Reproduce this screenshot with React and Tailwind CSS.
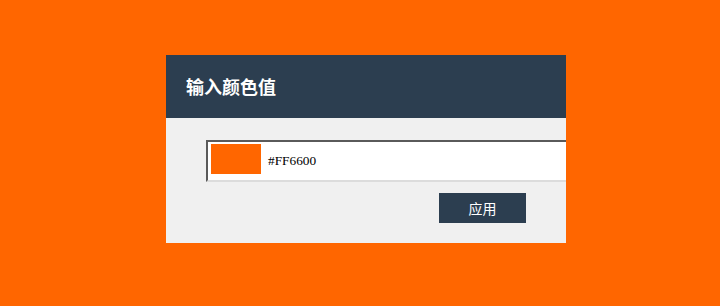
export default function App() {
  return (
    <div className="h-[306px] w-[720px] bg-[#ff6600] pl-[166px] pt-[55px]">
      <div className="w-[400px] h-[188px] overflow-hidden bg-[#f0f0f0] flex flex-col">
        {/* header */}
        <div className="h-[63px] bg-[#2c3e50] flex items-center px-5">
          <h2 className="text-white text-[18px] font-bold font-['Noto_Sans_CJK_SC',sans-serif]">
            输入颜色值
          </h2>
        </div>

        {/* body */}
        <div className="pl-10 pt-[22px] flex flex-col">
          <div className="w-[380px] h-[42px] bg-white border-2 border-t-[#5a5a5a] border-l-[#5a5a5a] border-b-[#dcdcdc] border-r-[#dcdcdc] flex items-start">
            <div className="w-[50px] h-[30px] bg-[#ff6600] ml-[3px] mt-[2px] shrink-0"></div>
            <span className="ml-[7px] mt-[11px] text-[13.333px] leading-[16px] text-black font-['Liberation_Serif',serif]">
              #FF6600
            </span>
          </div>
          <div className="w-[320px] flex justify-end mt-[11px]">
            <button className="w-[87px] h-[30px] bg-[#2c3e50] text-white text-[14px] font-['Noto_Sans_CJK_SC',sans-serif]">
              应用
            </button>
          </div>
        </div>
      </div>
    </div>
  );
}
